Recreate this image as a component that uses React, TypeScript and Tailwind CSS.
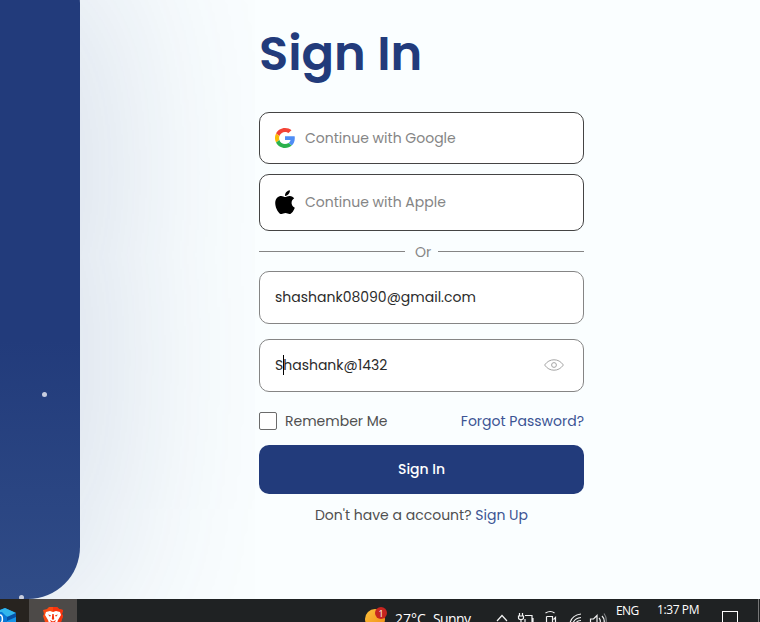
import type { ReactNode } from "react";

function GoogleLogo() {
  return (
    <svg width="20" height="20" viewBox="0 0 48 48" className="shrink-0">
      <path fill="#f44336" d="M24 9.600c3.600 0 6.300 1 8.300 2.600l7.300-6.600C35.500 2 30.500 0 24 0 14.600 0 6.500 5.400 2.600 13.200l8 6.200C12.500 13.700 17.800 9.600 24 9.600z" />
      <path fill="#4f8df5" d="M47.500 24.500c0-1.700-.1-3.300-.4-4.900H24v9.300h13.200c-.6 3-2.300 5.600-4.900 7.300l7.700 6c4.600-4.200 7.500-10.400 7.500-17.700z" />
      <path fill="#fbbc05" d="M10.600 28.600A14.400 14.400 0 0 1 10.600 19.400l-8-6.200a24 24 0 0 0 0 21.600z" />
      <path fill="#2bb24c" d="M24 48c6.500 0 11.900-2.100 16-5.800l-7.700-6c-2.200 1.500-4.900 2.300-8.300 2.300-6.200 0-11.500-4.200-13.400-9.900l-8 6.200C6.500 42.600 14.600 48 24 48z" />
    </svg>
  );
}

function AppleLogo() {
  return (
    <svg width="20" height="25" viewBox="0 0 384 470" preserveAspectRatio="none" className="shrink-0">
      <path transform="translate(0 -28)" d="M318.700 268.700c-.2-36.700 16.400-64.400 50-84.800-18.800-26.900-47.200-41.700-84.700-44.600-35.500-2.800-74.300 20.700-88.500 20.700-15 0-49.400-19.700-76.400-19.700C63.300 141.200 4 184.800 4 273.500q0 39.300 14.400 81.200c12.800 36.700 59 126.700 107.200 125.200 25.200-.6 43-17.900 75.800-17.900 31.800 0 48.300 17.900 76.400 17.900 48.600-.7 90.400-82.500 102.600-119.300-65.200-30.700-61.700-90-61.700-91.900zm-56.600-164.200c27.300-32.400 24.800-61.900 24-72.500-24.100 1.400-52 16.400-67.900 34.900-17.500 19.800-27.800 44.300-25.600 71.900 26.100 2 49.900-11.400 69.500-34.300z" />
    </svg>
  );
}

function EyeIcon() {
  return (
    <svg width="20" height="12" viewBox="0 0 20 12" fill="none" stroke="#a5a5a5" strokeWidth="1">
      <path d="M.6 6C3.200 2.400 6.300.8 10 .8S16.800 2.400 19.400 6C16.800 9.600 13.700 11.200 10 11.200S3.200 9.600.6 6z" />
      <circle cx="10" cy="6" r="2.400" />
    </svg>
  );
}

function SocialButton({ icon, className, children }: { icon: ReactNode; className: string; children: ReactNode }) {
  return (
    <button className={`flex w-full items-center gap-2.5 rounded-[10px] border border-[#444] bg-white px-[15px] text-sm text-[#858585] ${className}`}>
      {icon}
      {children}
    </button>
  );
}

function Taskbar() {
  return (
    <footer className="relative flex h-[23px] items-start overflow-hidden bg-[#1f2223] font-['Open_Sans',sans-serif] text-white">
      <div className="h-full w-[29px] bg-[#27231f]">
        <svg width="29" height="23" viewBox="0 0 29 23">
          <path d="M-5 13 5 9l11 5v14H-5z" fill="#0876d5" />
          <path d="M-5 13 5 9l11 5-8 4z" fill="#31b6ed" />
          <path d="m7 18 9-4v11l-9 4z" fill="#0751a5" />
          <path d="m7 22 9-4v6H7z" fill="#1594e8" />
          <path d="M-5 13h7l5 5v6H-5z" fill="#0876d5" />
          <ellipse cx="0" cy="20" rx="2.400" ry="4" fill="none" stroke="#fff" strokeWidth="1.500" />
        </svg>
      </div>
      <div className="flex h-full w-12 justify-center bg-[#4d4a48]">
        <svg width="22" height="23" viewBox="0 0 22 23">
          <path d="m1 11 4-1 2-2h8l2 2 4 1-1 4 1 2-4 12H5L1 17l1-2z" fill="#fb4a13" />
          <path d="m11 8 4 0 2 2 4 1-1 4 1 2-4 12h-6z" fill="#f8320d" />
          <path d="m4 13 4-1 3 1 3-1 4 1 1 3-3 5-2 6H8l-2-6-3-5z" fill="#fff" />
          <path d="m6 15.500 3 .8-1 1.500zM16 15.500l-3 .8 1 1.500zM10.300 15h1.400l.5 5-1.200 1-1.200-1zM8 21l3 1.500 3-1.500-1 2H9z" fill="#f8320d" />
        </svg>
      </div>
      <div className="ml-[287px] flex">
        <svg width="25" height="23" viewBox="0 0 25 23">
          <defs>
            <linearGradient id="sun" x1="0" y1="0" x2="1" y2="1">
              <stop stopColor="#fbc13b" />
              <stop offset="1" stopColor="#f18a13" />
            </linearGradient>
          </defs>
          <circle cx="11" cy="20" r="10" fill="url(#sun)" />
          <circle cx="17" cy="14" r="6" fill="#c62520" />
          <text x="17" y="17.500" textAnchor="middle" fill="#fff" fontSize="9" fontFamily="Open Sans">1</text>
        </svg>
      </div>
      <span className="ml-[6px] mt-[10px] w-[38px] whitespace-nowrap text-[14px] leading-5">27°C</span>
      <span className="mt-[10px] w-[63px] text-[14px] leading-5 tracking-[-0.6px]">Sunny</span>
      <svg width="112" height="23" viewBox="496 0 112 23" fill="none" stroke="#f2f2f2" strokeWidth="1.200" className="shrink-0">
        <path d="m497 22 5-5.500 5 5.500" />
        <path d="M519.500 14v3m3-3v3m-4 0h5v2c0 2-5 2-5 0zm2.500 4v3m4-7.500h7V24m-7 0v-4m8-1v5" />
        <path d="M545.500 14q5-3 9 0m-8 3.500h6v7m-6-7v7m7-4 2-2v6" />
        <path d="M570 24q2-8 11-9m-8 9q2-5 8-5.500m-5 5.500q1-2.500 5-2.500" />
        <path d="M590.500 24v-4h3l3.500-3.500V24m2-5q2 2 1 5m2-7q3 3 2 7" />
        <path stroke="#7c7f80" d="M604 14.500q3 4 2 9.500" />
      </svg>
      <span className="ml-2 mt-[3px] w-[41px] text-xs leading-[18px] tracking-[-0.6px]">ENG</span>
      <span className="mt-0.5 w-[65px] whitespace-nowrap text-xs leading-[18px] tracking-[-0.4px]">1:37 PM</span>
      <div className="mt-3 h-4 w-4 shrink-0 border border-white" />
      <div className="ml-[20px] h-full w-px shrink-0 bg-[#777]" />
    </footer>
  );
}

export default function App() {
  return (
    <div className="h-[622px] w-[760px] overflow-hidden bg-[#fafeff] font-[Poppins,Inter,sans-serif]">
      <main className="flex h-[599px] items-start overflow-hidden">
        <aside className="relative -ml-[320px] -mt-[48px] h-[647px] w-[400px] shrink-0 rounded-[52px] bg-linear-to-b from-[#223b7b] from-60% to-[#304c87] shadow-[0_0_200px_rgba(35,60,123,0.25)]">
          <i className="absolute left-[362px] top-[440px] h-[5px] w-[5px] rounded-full bg-[#c8cee0]" />
          <i className="absolute left-[339px] top-[643px] h-[5px] w-[5px] rounded-full bg-[#c8cee0]" />
        </aside>
        <section className="relative ml-[179px] flex w-[325px] shrink-0 flex-col text-sm">
          <h1 className="mt-[18px] h-[72px] whitespace-nowrap text-5xl font-semibold leading-[72px] text-[#223b7b]">Sign In</h1>
          <SocialButton className="mt-[22px] h-[52px]" icon={<GoogleLogo />}>
            <span>Continue with Google</span>
          </SocialButton>
          <SocialButton className="mt-2.5 h-[57px]" icon={<AppleLogo />}>
            <span className="pb-0.5">Continue with Apple</span>
          </SocialButton>
          <div className="flex h-10 items-center text-[#858585]">
            <div className="h-px flex-1 bg-[#858585]" />
            <span className="w-[33px] pl-[3px] pt-0.5 text-center">Or</span>
            <div className="h-px flex-1 bg-[#858585]" />
          </div>
          <div className="flex h-[53px] items-center rounded-[10px] border border-[#858585] bg-white px-[15px] pb-0.5 text-[#2b2b2b]">
            <span>shashank08090@gmail.com</span>
          </div>
          <div className="relative mt-[15px] flex h-[53px] items-center justify-between rounded-[10px] border border-[#858585] bg-white pb-0.5 pl-[15px] pr-[19px] text-[#2b2b2b]">
            <span>Shashank@1432</span>
            <i className="absolute left-[23px] top-[15px] h-5 w-px bg-black" />
            <EyeIcon />
          </div>
          <div className="mt-5 flex h-[18px] items-center text-[#505050]">
            <div className="mr-2 h-[18px] w-[18px] rounded-[2px] border border-[#6b6b6b] bg-white" />
            <span>Remember Me</span>
            <a className="ml-auto text-[#3c5494]">Forgot Password?</a>
          </div>
          <button className="mt-[15px] h-[49px] rounded-[10px] bg-[#223b7b] pb-0.5 font-medium text-white">Sign In</button>
          <p className="mt-[11px] whitespace-nowrap text-center leading-5 text-[#505050]">
            Don't have a account? <a className="text-[#3c5494]">Sign Up</a>
          </p>
        </section>
      </main>
      <Taskbar />
    </div>
  );
}
